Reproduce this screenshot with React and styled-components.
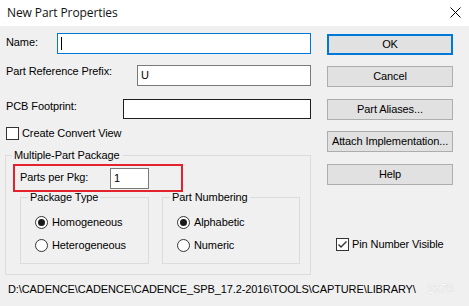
import React from "react";
import styled, { createGlobalStyle } from "styled-components";

const GlobalStyle = createGlobalStyle`
  html, body { margin: 0; padding: 0; background: #f0f0f0; }
  * { box-sizing: border-box; }
`;

const Window = styled.div`
  width: 469px;
  height: 306px;
  background: #f0f0f0;
  display: flex;
  flex-direction: column;
  font-family: "Liberation Sans", Arial, sans-serif;
  font-size: 11px;
  letter-spacing: -0.1px;
  color: #000;
  overflow: hidden;
`;

const TitleBar = styled.div`
  height: 26px;
  flex: none;
  background: #fff;
  display: flex;
  align-items: center;
  justify-content: space-between;
  padding: 0 8px 2px 7px;
`;

const Title = styled.div`
  font-family: "Open Sans", "Noto Sans", sans-serif;
  font-size: 12px;
  color: #111;
  letter-spacing: -0.1px;
`;

const Body = styled.div`
  display: flex;
  padding: 7px 0 0 5px;
`;

const LeftCol = styled.div`
  width: 306px;
  display: flex;
  flex-direction: column;
`;

const FieldRow = styled.div`
  display: flex;
  justify-content: space-between;
  align-items: flex-start;
  margin-top: ${(p) => p.$mt || 0}px;
  height: ${(p) => p.$h || 21}px;
`;

const Label = styled.span`
  padding-left: 1px;
  padding-top: ${(p) => p.$pt || 0}px;
  line-height: 13px;
  white-space: nowrap;
`;

const TextBox = styled.div`
  width: ${(p) => p.$w}px;
  height: ${(p) => p.$h || 21}px;
  background: #fff;
  border: 1px solid ${(p) => p.$border || "#7a7a7a"};
  display: flex;
  align-items: center;
  padding-left: 3px;
  line-height: 13px;
`;

const Caret = styled.span`
  width: 1px;
  height: 13px;
  background: #000;
`;

const CheckRow = styled.div`
  display: flex;
  align-items: center;
  gap: 3px;
  height: 13px;
  margin-top: ${(p) => p.$mt || 0}px;
  margin-left: ${(p) => p.$ml || 0}px;
  line-height: 13px;
  white-space: nowrap;
`;

const CheckBox = styled.span`
  width: 13px;
  height: 13px;
  flex: none;
  background: #fff;
  border: 1px solid #333;
  display: flex;
  align-items: center;
  justify-content: center;
`;

const Group = styled.fieldset`
  margin: ${(p) => p.$mt || 0}px 0 0 0;
  padding: 0;
  border: 1px solid #dcdcdc;
  min-width: 0;
  width: ${(p) => p.$w}px;
  height: ${(p) => p.$h}px;
`;

const Legend = styled.legend`
  margin-left: ${(p) => p.$ml || 6}px;
  padding: 0 2px;
  line-height: ${(p) => p.$lh || 14}px;
  white-space: nowrap;
`;

const Highlight = styled.div`
  margin: 2px 0 0 7px;
  width: 170px;
  height: 28px;
  border: 2px solid #e3222b;
  display: flex;
  align-items: flex-start;
  padding-left: 5px;
`;

const PkgLabel = styled.span`
  width: 90px;
  padding-top: 5px;
  line-height: 13px;
`;

const SmallBox = styled(TextBox)`
  margin-top: 2px;
`;

const SubGroups = styled.div`
  display: flex;
  gap: 13px;
  margin-left: 14px;
`;

const GroupBody = styled.div`
  display: flex;
  flex-direction: column;
  gap: 10px;
  padding: 13px 0 0 14px;
`;

const RadioRow = styled.div`
  display: flex;
  align-items: center;
  gap: 4px;
  height: 13px;
  line-height: 13px;
`;

const RadioCircle = styled.span`
  width: 13px;
  height: 13px;
  flex: none;
  border-radius: 50%;
  border: 1px solid #333;
  background: #fff;
  display: flex;
  align-items: center;
  justify-content: center;
  &::after {
    content: "";
    display: ${(p) => (p.$on ? "block" : "none")};
    width: 7px;
    height: 7px;
    border-radius: 50%;
    background: #1a1a1a;
  }
`;

const RightCol = styled.div`
  width: 126px;
  margin-left: 16px;
  display: flex;
  flex-direction: column;
`;

const Button = styled.div`
  height: 21px;
  margin-top: ${(p) => p.$mt || 0}px;
  background: #e1e1e1;
  border: ${(p) => (p.$default ? "2px solid #0078d7" : "1px solid #adadad")};
  display: flex;
  align-items: center;
  justify-content: center;
  line-height: 13px;
  white-space: nowrap;
`;

const Footer = styled.div`
  position: relative;
  margin-top: 8px;
  padding-left: 8px;
  line-height: 13px;
  white-space: nowrap;
`;

const Watermark = styled.span`
  position: absolute;
  left: 427px;
  top: 0;
  color: #fbfbfb;
  font-size: 12px;
  text-shadow: 0 0 1px #b8b8b8;
`;

const CloseIcon = () => (
  <svg width="11" height="11" viewBox="0 0 11 11">
    <path d="M0.5 0.5 L10.5 10.5 M10.5 0.5 L0.5 10.5" stroke="#000" strokeWidth="1" />
  </svg>
);

const Check = () => (
  <svg width="11" height="11" viewBox="0 0 11 11">
    <polyline points="1.5,5.5 4,8 9.5,2.5" fill="none" stroke="#333" strokeWidth="1.4" />
  </svg>
);

export default function App() {
  return (
    <>
      <GlobalStyle />
      <Window>
        <TitleBar>
          <Title>New Part Properties</Title>
          <CloseIcon />
        </TitleBar>
        <Body>
          <LeftCol>
            <FieldRow>
              <Label $pt={3}>Name:</Label>
              <TextBox $w={254} $border="#0078d7">
                <Caret />
              </TextBox>
            </FieldRow>
            <FieldRow $mt={11}>
              <Label $pt={0}>Part Reference Prefix:</Label>
              <TextBox $w={174}>U</TextBox>
            </FieldRow>
            <FieldRow $mt={13} $h={20}>
              <Label $pt={1}>PCB Footprint:</Label>
              <TextBox $w={188} $h={20} $border="#1e1e1e" />
            </FieldRow>
            <CheckRow $mt={8} $ml={1}>
              <CheckBox />
              <span>Create Convert View</span>
            </CheckRow>
            <Group $mt={8} $w={306} $h={127}>
              <Legend>Multiple-Part Package</Legend>
              <Highlight>
                <PkgLabel>Parts per Pkg:</PkgLabel>
                <SmallBox $w={39}>1</SmallBox>
              </Highlight>
              <SubGroups>
                <Group $w={129} $h={72}>
                  <Legend $ml={7} $lh={11}>Package Type</Legend>
                  <GroupBody>
                    <RadioRow>
                      <RadioCircle $on />
                      <span>Homogeneous</span>
                    </RadioRow>
                    <RadioRow>
                      <RadioCircle />
                      <span>Heterogeneous</span>
                    </RadioRow>
                  </GroupBody>
                </Group>
                <Group $w={138} $h={72}>
                  <Legend $ml={7} $lh={11}>Part Numbering</Legend>
                  <GroupBody>
                    <RadioRow>
                      <RadioCircle $on />
                      <span>Alphabetic</span>
                    </RadioRow>
                    <RadioRow>
                      <RadioCircle />
                      <span>Numeric</span>
                    </RadioRow>
                  </GroupBody>
                </Group>
              </SubGroups>
            </Group>
          </LeftCol>
          <RightCol>
            <Button $default $mt={1}>OK</Button>
            <Button $mt={11}>Cancel</Button>
            <Button $mt={12}>Part Aliases...</Button>
            <Button $mt={11}>Attach Implementation...</Button>
            <Button $mt={12}>Help</Button>
            <CheckRow $mt={53} $ml={9}>
              <CheckBox>
                <Check />
              </CheckBox>
              <span>Pin Number Visible</span>
            </CheckRow>
          </RightCol>
        </Body>
        <Footer>
          D:\CADENCE\CADENCE\CADENCE_SPB_17.2-2016\TOOLS\CAPTURE\LIBRARY\
          <Watermark>1679</Watermark>
        </Footer>
      </Window>
    </>
  );
}
